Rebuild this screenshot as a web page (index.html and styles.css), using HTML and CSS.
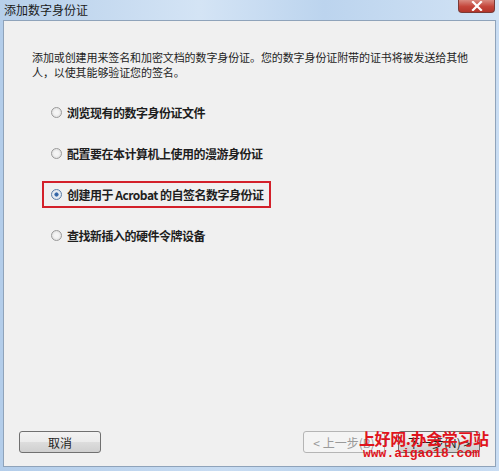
FILE: index.html
```html
<html>
    <head>
        <link rel="stylesheet" href="styles.css">
    </head>
    <body>
        <div class="window">
            <div class="titlebar">
                <span class="title">添加数字身份证</span>
                <button class="close">
                    <svg width="12" height="10" viewBox="0 0 12 10"><path d="M2 1 L10 9 M10 1 L2 9" stroke="#fff" stroke-width="2.2" stroke-linecap="square"/></svg>
                </button>
            </div>
            <div class="panel">
                <p class="intro">添加或创建用来签名和加密文档的数字身份证。您的数字身份证附带的证书将被发送给其他人，以使其能够验证您的签名。</p>
                <div class="options">
                    <label class="option"><span class="radio"></span>浏览现有的数字身份证文件</label>
                    <label class="option"><span class="radio"></span>配置要在本计算机上使用的漫游身份证</label>
                    <label class="option marked"><span class="radio checked"></span>创建用于 Acrobat 的自签名数字身份证</label>
                    <label class="option"><span class="radio"></span>查找新插入的硬件令牌设备</label>
                </div>
                <div class="buttons">
                    <button class="btn">取消</button>
                    <div class="nav">
                        <button class="btn disabled">&lt; 上一步(B)</button>
                        <button class="btn">下一步(N) &gt;</button>
                    </div>
                </div>
            </div>
            <div class="watermark">
                <div class="wm-title">上好网.办会学习站</div>
                <div class="wm-url">www.aigao18.com</div>
            </div>
        </div>
    </body>
</html>
```

FILE: styles.css
```css
body {
    margin: 0;
    font-family: "Noto Sans CJK SC", "DejaVu Sans", sans-serif;
    color: #1e1e1e;
}
.window {
    position: relative;
    width: 499px;
    height: 471px;
    display: flex;
    flex-direction: column;
    background: linear-gradient(90deg, #b3cdea 0%, #c8dcf2 45%, #b9d2ec 70%, #c9ddf3 100%);
    overflow: hidden;
}
.titlebar {
    height: 20px;
    display: flex;
    align-items: flex-start;
    justify-content: space-between;
    padding-left: 4px;
    background: linear-gradient(90deg, #b6cfea 0%, #d4e4f5 40%, #bcd4ee 65%, #d2e3f5 100%);
}
.title {
    font-size: 12px;
    line-height: 19px;
    color: #1a1a1a;
}
.close {
    width: 37px;
    height: 13px;
    margin-right: 4px;
    padding: 0;
    border: 1px solid #7a3a36;
    border-top: 0;
    border-radius: 0 0 4px 4px;
    background: linear-gradient(#d98a80, #c4453a 55%, #b3362c);
    display: flex;
    align-items: center;
    justify-content: center;
}
.panel {
    flex: 1;
    margin: 0 3px 4px 3px;
    border: 1px solid #8fa3ba;
    background: #f0f0f0;
    display: flex;
    flex-direction: column;
}
.intro {
    margin: 29px 0 0 28px;
    width: 442px;
    font-size: 11px;
    line-height: 15px;
    letter-spacing: -0.1px;
}
.options {
    margin-top: 12px;
    display: flex;
    flex-direction: column;
}
.option {
    height: 41px;
    display: flex;
    align-items: center;
    padding-left: 47px;
    font-size: 12px;
    font-weight: bold;
    letter-spacing: -0.5px;
}
.marked {
    position: relative;
}
.marked::after {
    content: "";
    position: absolute;
    left: 38px;
    top: 7px;
    width: 225px;
    height: 23px;
    border: 2px solid #d3202a;
}
.radio {
    width: 9px;
    height: 9px;
    margin-right: 5px;
    border: 1px solid #9a9a9a;
    border-radius: 50%;
    background: radial-gradient(circle, #f4f4f4 30%, #d6d6d6 100%);
}
.radio.checked {
    border-color: #5d7fa8;
    background: radial-gradient(circle, #2d5c9a 0, #3d6fb0 28%, #e9eef4 38%, #d4dce6 100%);
}
.buttons {
    margin-top: auto;
    padding: 0 15px 13px 15px;
    display: flex;
    justify-content: space-between;
}
.nav {
    display: flex;
    gap: 13px;
}
.btn {
    width: 82px;
    height: 22px;
    padding: 0;
    font-family: inherit;
    font-size: 12px;
    color: #1e1e1e;
    border: 1px solid #707070;
    border-radius: 3px;
    background: linear-gradient(#f2f2f2 0%, #ebebeb 50%, #dddddd 51%, #cfcfcf 100%);
}
.btn.disabled {
    color: #9a9a9a;
    border-color: #b5b5b5;
    background: #f4f4f4;
}
.watermark {
    position: absolute;
    left: 359px;
    top: 428px;
    color: #e0141c;
    font-weight: bold;
}
.wm-title {
    font-family: "Noto Sans CJK SC", sans-serif;
    font-size: 16px;
    line-height: 20px;
    letter-spacing: -0.4px;
}
.wm-url {
    margin-left: 4px;
    font-family: "Liberation Mono", monospace;
    font-size: 13px;
    line-height: 12px;
}
```
